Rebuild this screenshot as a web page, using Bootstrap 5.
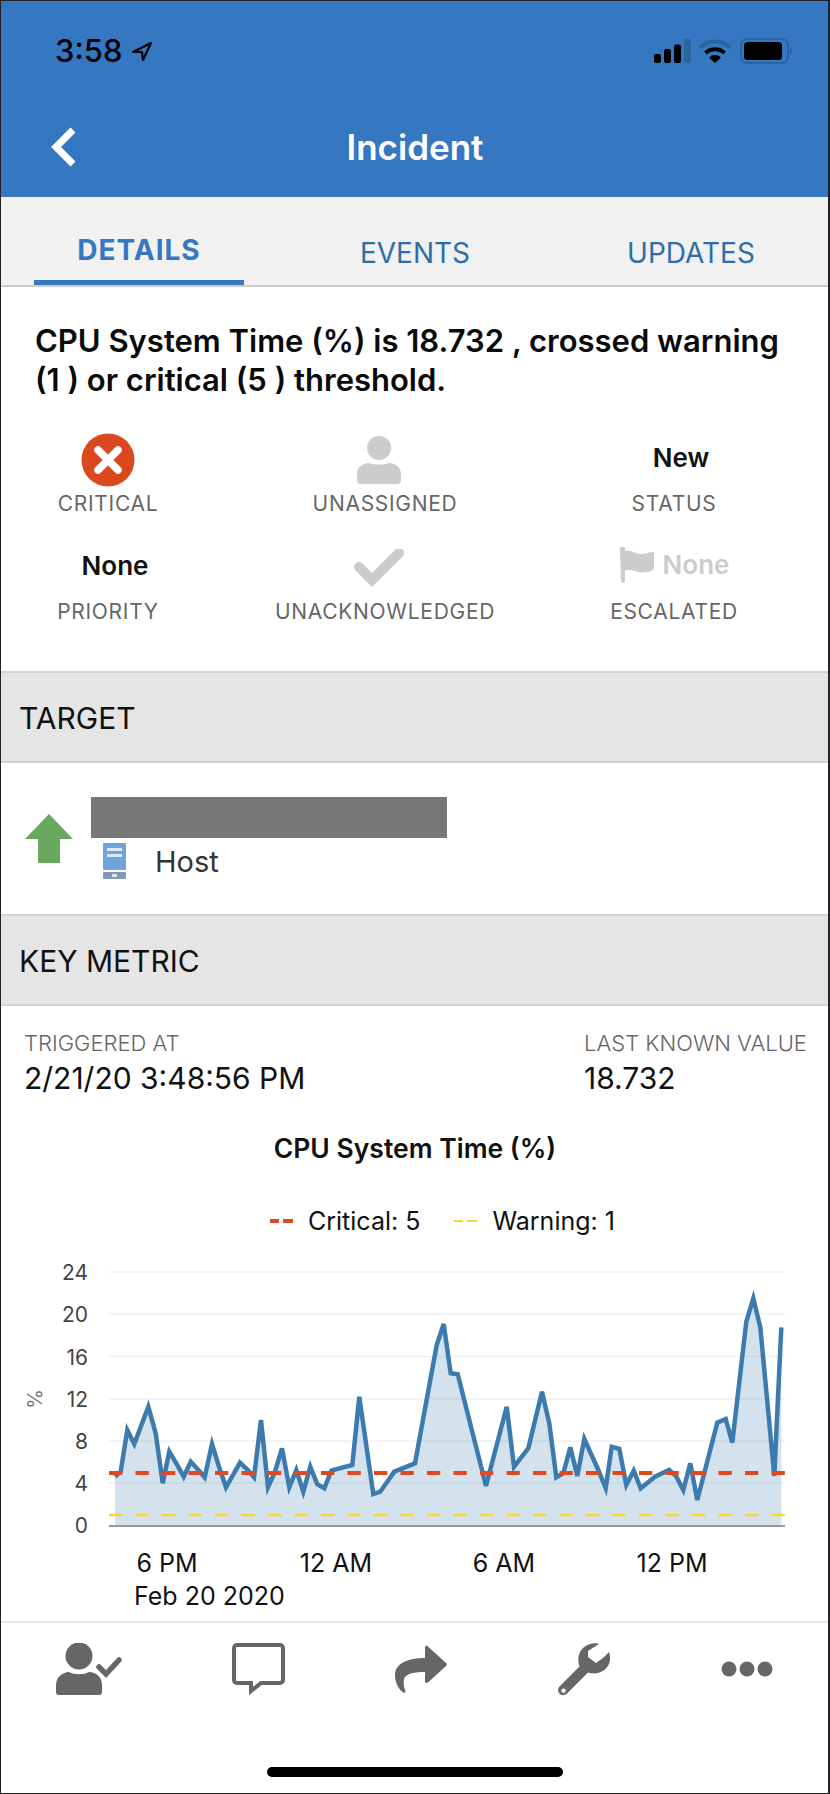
<!DOCTYPE html>
<html lang="en">
<head>
  <meta charset="UTF-8">
  <title>Incident</title>
  <link href="https://cdn.jsdelivr.net/npm/bootstrap@5.3.2/dist/css/bootstrap.min.css" rel="stylesheet">
  <style>
    body {
      background: #fff;
      font-family: Inter, Roboto, "Liberation Sans", sans-serif;
      color: #111;
    }
    .phone {
      position: relative;
      width: 830px;
      height: 1794px;
      overflow: hidden;
      background: #fff;
    }
    .phone::after {
      content: "";
      position: absolute;
      inset: 0;
      border: 1px solid #222;
      border-right-width: 2px;
      pointer-events: none;
    }
    .app-head {
      height: 197px;
      padding-top: 31px;
      background: #3578c1;
    }
    .status-row {
      height: 40px;
      padding: 0 38px 0 55px;
    }
    .clock {
      font-size: 31px;
      font-weight: 500;
      color: #000;
      line-height: 40px;
    }
    .signal-icon { margin-right: 6px; }
    .title-row {
      position: relative;
      height: 60px;
      margin-top: 46px;
    }
    .title-row svg {
      position: absolute;
      left: 50px;
      top: 9px;
    }
    .app-title {
      font-size: 35px;
      font-weight: 600;
      color: #fff;
      line-height: 60px;
    }
    .tab-bar {
      height: 90px;
      padding: 0 34px;
      gap: 66px;
      background: #f1f1f1;
      border-bottom: 2px solid #ccc;
    }
    .tab-bar .nav-link {
      width: 210px;
      height: 89px;
      padding: 37px 0 0;
      margin-bottom: -1px;
      text-align: center;
      font-size: 28px;
      line-height: 38px;
      color: #2f6da8;
    }
    .tab-bar .nav-link.active {
      height: 88px;
      padding-top: 34px;
      font-weight: 700;
      letter-spacing: 1px;
      color: #3578c1;
      border-bottom: 5px solid #3578c1;
    }
    .summary {
      height: 384px;
      padding: 34px 35px 0;
    }
    .headline {
      font-size: 31px;
      font-weight: 600;
      line-height: 39px;
      margin: 0;
      color: #0a0a0a;
    }
    .facts {
      display: grid;
      grid-template-columns: 216px 338px 240px;
      row-gap: 23px;
      margin: 32px 0 0 -35px;
      width: 794px;
      text-align: center;
    }
    .fact-value {
      height: 52px;
      font-size: 26px;
      font-weight: 600;
      line-height: 54px;
    }
    .fact-label {
      height: 24px;
      margin-top: 9px;
      font-size: 21px;
      line-height: 24px;
      color: #666;
      letter-spacing: .7px;
    }
    .shift-r { padding-left: 14px; }
    .shift-l { padding-right: 12px; }
    .muted-val { color: #ccc; }
    .band {
      height: 92px;
      padding-left: 19px;
      font-size: 30px;
      line-height: 90px;
      background: #e5e5e5;
      border-top: 2px solid #d2d2d2;
      border-bottom: 2px solid #d2d2d2;
    }
    .target-row {
      height: 151px;
      padding: 34px 0 0 24px;
    }
    .target-text { margin-left: 17px; }
    .redacted {
      width: 356px;
      height: 41px;
      background: #777;
    }
    .host-line {
      margin: 5px 0 0 12px;
      font-size: 29px;
      line-height: 35px;
      color: #333;
    }
    .host-line svg { margin-right: 29px; }
    .metric-row {
      padding: 23px 24px 0;
    }
    .metric-row small {
      display: block;
      font-size: 22px;
      font-weight: 300;
      line-height: 28px;
      color: #666;
    }
    .metric-value {
      font-size: 30px;
      line-height: 42px;
      color: #111;
    }
    .last-known { width: 222px; }
    .chart-title {
      margin-top: 34px;
      font-size: 26.5px;
      font-weight: 600;
      line-height: 30px;
      text-align: center;
    }
    .legend-row {
      margin-top: 43px;
      padding-left: 270px;
      font-size: 25px;
      line-height: 30px;
    }
    .legend-dash {
      width: 23px;
      height: 4px;
      margin-right: 15px;
      background: linear-gradient(90deg, #dd4a1f 9.5px, transparent 9.5px 13.5px, #dd4a1f 13.5px);
    }
    .legend-dash.warn {
      height: 2px;
      margin-left: 34px;
      background: linear-gradient(90deg, #fbd535 9.5px, transparent 9.5px 13.5px, #fbd535 13.5px);
    }
    .chart-wrap {
      display: block;
      margin-top: 14px;
    }
    .chart-wrap text {
      font-family: Inter, Roboto, "Liberation Sans", sans-serif;
    }
    .tool-bar {
      position: absolute;
      left: 0;
      right: 0;
      top: 1621px;
      height: 173px;
      padding: 20px 0 0 56px;
      gap: 110px;
      background: #fff;
      border-top: 2px solid #e6e6e6;
    }
    .home-bar {
      position: absolute;
      left: 267px;
      top: 1767px;
      width: 296px;
      height: 10px;
      border-radius: 5px;
      background: #000;
    }
  </style>
</head>
<body>

<div class="phone">
  <header class="app-head">
    <div class="status-row d-flex align-items-center justify-content-between">
      <div class="d-flex align-items-center gap-2">
        <span class="clock">3:58</span>
        <svg width="22" height="21" viewBox="0 0 22 21"><path d="M20 2 2 11h9l1 8z" fill="none" stroke="#000" stroke-width="2.2" stroke-linejoin="round"/></svg>
      </div>
      <div class="d-flex align-items-center">
        <svg width="38" height="24" viewBox="0 0 38 24" class="signal-icon">
          <rect x="0" y="15" width="7" height="9" rx="2" fill="#000"/>
          <rect x="10" y="10" width="7" height="14" rx="2" fill="#000"/>
          <rect x="20" y="5.5" width="7" height="18.5" rx="2" fill="#000"/>
          <rect x="30" y="0" width="7" height="24" rx="2" fill="#2a65a0"/>
        </svg>
        <svg width="34" height="26" viewBox="0 0 34 26" class="me-2">
          <path d="M2 9.5a22 22 0 0 1 30 0" fill="none" stroke="#2a65a0" stroke-width="4"/>
          <path d="M7.5 15a14 14 0 0 1 19 0" fill="none" stroke="#000" stroke-width="4"/>
          <path d="M17 25l-6-5.500a8.500 8.500 0 0 1 12 0z" fill="#000"/>
        </svg>
        <svg width="52" height="26" viewBox="0 0 52 26">
          <rect x="1" y="1" width="47" height="24" rx="6" fill="none" stroke="#2a65a0" stroke-width="2"/>
          <rect x="4" y="4" width="38" height="18" rx="3.500" fill="#000"/>
          <path d="M50 9l2 2v4l-2 2z" fill="#2a65a0"/>
        </svg>
      </div>
    </div>
    <div class="title-row text-center">
      <svg width="28" height="42" viewBox="0 0 28 42"><path d="M23 4 6 21l17 17" fill="none" stroke="#fff" stroke-width="7"/></svg>
      <span class="app-title">Incident</span>
    </div>
  </header>

  <ul class="nav tab-bar flex-nowrap">
    <li class="nav-item"><a class="nav-link active" href="#">DETAILS</a></li>
    <li class="nav-item"><a class="nav-link" href="#">EVENTS</a></li>
    <li class="nav-item"><a class="nav-link" href="#">UPDATES</a></li>
  </ul>

  <section class="summary">
    <p class="headline">CPU System Time (%) is 18.732 , crossed warning (1 ) or critical (5 ) threshold.</p>
    <div class="facts">
      <div>
        <div class="fact-value">
          <svg width="54" height="54" viewBox="0 0 54 54"><circle cx="27" cy="27" r="26.500" fill="#d9481f"/><path d="M17 17l20 20M37 17 17 37" stroke="#fff" stroke-width="7.500" stroke-linecap="round"/></svg>
        </div>
        <div class="fact-label">CRITICAL</div>
      </div>
      <div>
        <div class="fact-value shift-l">
          <svg width="44" height="48" viewBox="0 0 44 48"><circle cx="22" cy="12" r="12" fill="#ccc"/><path d="M0 44V38C0 31 6 27 12 27c5 2 15 2 20 0 6 0 12 4 12 11v6q0 4-4 4H4q-4 0-4-4z" fill="#ccc"/></svg>
        </div>
        <div class="fact-label">UNASSIGNED</div>
      </div>
      <div>
        <div class="fact-value shift-r">New</div>
        <div class="fact-label">STATUS</div>
      </div>
      <div>
        <div class="fact-value shift-r">None</div>
        <div class="fact-label">PRIORITY</div>
      </div>
      <div>
        <div class="fact-value shift-l">
          <svg width="50" height="38" viewBox="0 2 50 38"><path d="M5 20 18 33 45 6" fill="none" stroke="#ccc" stroke-width="10" stroke-linecap="round"/></svg>
        </div>
        <div class="fact-label">UNACKNOWLEDGED</div>
      </div>
      <div>
        <div class="fact-value muted-val d-flex justify-content-center align-items-center gap-2">
          <svg width="36" height="36" viewBox="0 0 36 36"><path d="M1 2a2.500 2.500 0 0 1 5 0v32a2 2 0 0 1-4 0z" fill="#ccc"/><path d="M5 4c7-2 12 4 18 3 4 0 8-2 11-2 1 0 1 1 1 1v16c-4 4-11 4-16 3-5-2-9-3-14-1z" fill="#ccc"/></svg>
          <span>None</span>
        </div>
        <div class="fact-label">ESCALATED</div>
      </div>
    </div>
  </section>

  <div class="band">TARGET</div>

  <section class="target-row d-flex">
    <svg width="50" height="51" viewBox="0 0 50 51" class="mt-3 flex-shrink-0"><path d="M25 1 49 26H36V50H14V26H1z" fill="#6aa860"/></svg>
    <div class="target-text">
      <div class="redacted"></div>
      <div class="host-line d-flex align-items-end">
        <svg width="23" height="36" viewBox="0 0 23 36">
          <rect width="23" height="27" rx="1" fill="#6fa3dc"/>
          <rect x="4" y="5" width="15" height="3" fill="#dce9f7"/>
          <rect x="4" y="11" width="15" height="3" fill="#dce9f7"/>
          <rect y="29" width="23" height="7" rx="1" fill="#7f9ab8"/>
          <rect x="9" y="31" width="5" height="3" fill="#dfe6ee"/>
        </svg>
        <span>Host</span>
      </div>
    </div>
  </section>

  <div class="band">KEY METRIC</div>

  <section>
    <div class="metric-row d-flex justify-content-between">
      <div>
        <small>TRIGGERED AT</small>
        <div class="metric-value">2/21/20 3:48:56 PM</div>
      </div>
      <div class="last-known">
        <small class="text-nowrap">LAST KNOWN VALUE</small>
        <div class="metric-value">18.732</div>
      </div>
    </div>
    <div class="chart-title">CPU System Time (%)</div>
    <div class="legend-row d-flex align-items-center">
      <span class="legend-dash"></span><span>Critical: 5</span>
      <span class="legend-dash warn"></span><span>Warning: 1</span>
    </div>
    <svg id="chart" class="chart-wrap" width="830" height="380" viewBox="0 1250 830 380"></svg>
  </section>

  <nav class="tool-bar d-flex align-items-start">
    <svg width="66" height="53" viewBox="0 0 66 53" class="flex-shrink-0">
      <circle cx="23" cy="13" r="13.500" fill="#666"/>
      <path d="M0 49V42C0 34 7 29 13 29c5 3 15 3 20 0 7 0 13 5 13 13v7q0 3-3 3H3q-3 0-3-3z" fill="#666"/>
      <path d="M43 24l7 7 13-14" fill="none" stroke="#666" stroke-width="5.500" stroke-linecap="round"/>
    </svg>
    <svg width="53" height="53" viewBox="0 0 53 53" class="flex-shrink-0">
      <path d="M5 2H48a3 3 0 0 1 3 3V37a3 3 0 0 1-3 3H29L19 48V40H5a3 3 0 0 1-3-3V5a3 3 0 0 1 3-3z" fill="none" stroke="#666" stroke-width="4"/>
    </svg>
    <svg width="53" height="53" viewBox="0 -3 53 53" class="flex-shrink-0">
      <path d="M30 1.500C30-.5 32-.5 33 .5L51 17c1 1 1 2 0 3L33 36.500C32 37.500 30 37 30 35V26C20 26 11 27 9 33c-1 4 0 9 1.500 12 0 2-2 2-3 1C3 42 0 36 0 29 0 17 14 12 30 12z" fill="#666"/>
    </svg>
    <svg width="52" height="53" viewBox="0 0 52 53" class="flex-shrink-0">
      <path fill-rule="evenodd" d="M1.500 43.500l20-20C18 14 22 3 34 .5c3-.5 6-.5 7 .5L30 8v6l8 6 7-5 6-6c1 2 1 5 1 8C51 27 40 33 30 29.500L10 49.500c-3 3.500-7 3.500-9 .5C-.5 48 0 45 1.500 43.500zM5.500 45.500a2.200 2.200 0 1 0 .1 0z" fill="#666"/>
    </svg>
    <svg width="54" height="53" viewBox="0 1 54 53" class="flex-shrink-0">
      <circle cx="9" cy="27" r="7.500" fill="#666"/><circle cx="27" cy="27" r="7.500" fill="#666"/><circle cx="45" cy="27" r="7.500" fill="#666"/>
    </svg>
  </nav>
  <div class="home-bar"></div>
</div>

<script>
  // points read off the chart, as [x, y] in page pixels
  const left = [[345,710],[362,695],[382,570],[403,612],[445,500],[467,580],[488,730],[508,635],[530,672],[551,710],[572,665],[593,688],[614,712],[636,612],[657,680],[678,742],[720,668],[741,688],[762,712],[783,540],[804,742],[825,695],[846,625],[868,742],[889,690],[910,755],[931,680],[952,733],[973,745],[994,692],[1057,675],[1078,470],[1120,762],[1141,755],[1183,695],[1245,670]];
  const right = [[65,315],[86,252],[107,400],[128,403],[213,738],[275,500],[297,680],[340,625],[381,455],[403,550],[424,712],[445,700],[466,622],[487,708],[508,597],[550,690],[572,745],[590,620],[613,626],[634,735],[656,692],[677,745],[720,710],[762,690],[783,708],[805,750],[826,670],[847,780],[907,548],[932,537],[952,608],[994,245],[1015,175],[1036,262],[1078,708],[1099,262]];
  const pts = left.map(p => [p[0] / 3, 1240 + p[1] / 3])
    .concat(right.map(p => [415 + p[0] / 3, 1240 + p[1] / 3]));
  const line = pts.map(p => p[0].toFixed(1) + ',' + p[1].toFixed(1)).join(' ');
  const last = pts[pts.length - 1];

  let svg = '';
  [[24,1272],[20,1314],[16,1356.5],[12,1399],[8,1441],[4,1483]].forEach(g => {
    svg += `<line x1="109" x2="785" y1="${g[1]}" y2="${g[1]}" stroke="#eef0f4" stroke-width="1.500"/>`;
  });
  [[24,1272],[20,1314],[16,1356.5],[12,1399],[8,1441],[4,1483],[0,1525]].forEach(g => {
    svg += `<text x="88" y="${g[1] + 8}" text-anchor="end" font-size="21" fill="#444">${g[0]}</text>`;
  });
  svg += `<text transform="translate(42 1399) rotate(-90)" text-anchor="middle" font-size="20" fill="#777">%</text>`;
  svg += `<polygon points="${pts[0][0]},1525 ${line} ${last[0]},1525" fill="#3d7bae" fill-opacity=".22"/>`;
  svg += `<line x1="109" x2="785" y1="1526" y2="1526" stroke="#999" stroke-width="2"/>`;
  svg += `<line x1="109" x2="785" y1="1515" y2="1515" stroke="#fbd535" stroke-width="2.500" stroke-dasharray="13.300 13.200"/>`;
  svg += `<polyline points="${line}" fill="none" stroke="#3d7bae" stroke-width="4.500" stroke-linejoin="miter"/>`;
  svg += `<line x1="109" x2="785" y1="1473" y2="1473" stroke="#dd4a1f" stroke-width="4" stroke-dasharray="13.300 13.200"/>`;
  [['6 PM',167],['12 AM',336],['6 AM',504],['12 PM',672]].forEach(t => {
    svg += `<text x="${t[1]}" y="1572" text-anchor="middle" font-size="25" fill="#111">${t[0]}</text>`;
  });
  svg += `<text x="134" y="1605" font-size="25" fill="#111">Feb 20 2020</text>`;
  document.getElementById('chart').innerHTML = svg;
</script>

<script src="https://cdn.jsdelivr.net/npm/bootstrap@5.3.2/dist/js/bootstrap.bundle.min.js"></script>

</body>
</html>
